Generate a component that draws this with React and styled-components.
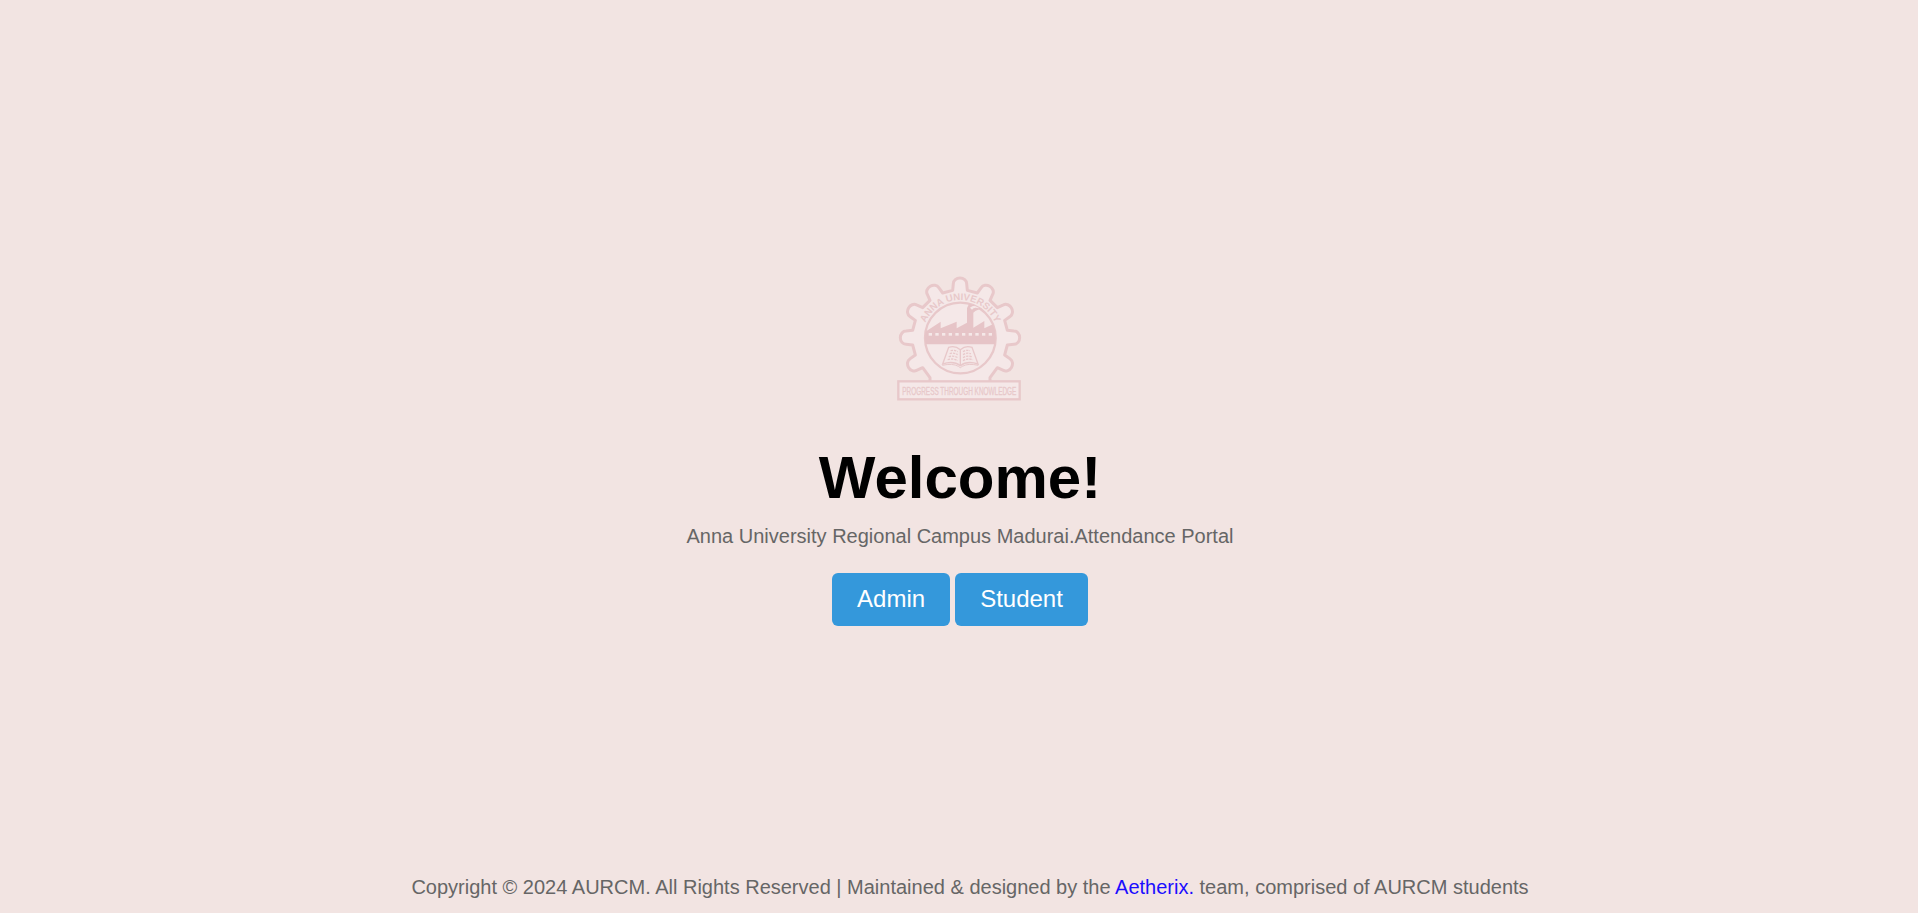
import React from "react";
import styled, { createGlobalStyle } from "styled-components";

const GlobalStyle = createGlobalStyle`
  * { box-sizing: border-box; }
  body {
    margin: 0;
    background: #f2e4e2;
    font-family: "Liberation Sans", Arial, sans-serif;
  }
`;

const Page = styled.div`
  display: flex;
  flex-direction: column;
  height: 100vh;
`;

const Main = styled.main`
  flex: 1;
  display: flex;
  flex-direction: column;
  align-items: center;
  padding: 265px 0 0 2px;
`;

const Logo = styled.svg`
  display: block;
  width: 140px;
  height: 145px;
  overflow: visible;
`;

const Title = styled.h1`
  margin: 33px 0 0;
  font-size: 60px;
  line-height: 69px;
  font-weight: 700;
  color: #000;
`;

const Subtitle = styled.p`
  margin: 13px 0 0;
  font-size: 20px;
  line-height: 23px;
  color: #666;
`;

const Actions = styled.div`
  display: flex;
  gap: 5px;
  margin-top: 25px;
`;

const Button = styled.button`
  height: 53px;
  padding: 0 25px 1px;
  border: 0;
  border-radius: 6px;
  background: #3498db;
  color: #fff;
  font-family: inherit;
  font-size: 24px;
  line-height: 28px;
  cursor: pointer;
`;

const Footer = styled.footer`
  padding: 0 0 14px 22px;
  text-align: center;
  font-size: 20px;
  line-height: 23px;
  color: #666;
`;

const FooterLink = styled.a`
  color: #1a0dff;
  text-decoration: none;
`;

const CX = 210;
const CY = 218;

// Converts a point of a tooth (sideways offset, distance outwards) to drawing coordinates.
const toothPoint = (deg, side, out) => {
  const a = (deg * Math.PI) / 180;
  const x = CX + out * Math.sin(a) + side * Math.cos(a);
  const y = CY - out * Math.cos(a) + side * Math.sin(a);
  return `${x.toFixed(1)} ${y.toFixed(1)}`;
};

const teeth = [-120, -90, -60, -30, 0, 30, 60, 90, 120]
  .map(
    (d) =>
      `L${toothPoint(d, -22, 142)} L${toothPoint(d, -20, 162)} A20 17 ${d} 0 1 ${toothPoint(d, 20, 162)} L${toothPoint(d, 22, 142)}`
  )
  .join(" ");
const gearPath = `M120 349 V338 ${teeth} L300 338 V349`;

const LINE = "#e8c8ca";
const SOLID = "#e6c4c7";
const PALE = "#f5e8e8";

function Emblem() {
  return (
    <Logo viewBox="0 0 420 435" role="img" aria-label="Anna University">
      <defs>
        <clipPath id="disc">
          <circle cx="211" cy="219" r="106" />
        </clipPath>
        <path id="arc" d="M97 219 A114 114 0 0 1 325 219" />
      </defs>
      <path d={gearPath} fill={PALE} stroke={LINE} strokeWidth="9" strokeLinejoin="round" />
      <circle cx="211" cy="219" r="106" fill={PALE} stroke={LINE} strokeWidth="7" />
      <g clipPath="url(#disc)" fill={SOLID}>
        <path d="M100 238 V204 L152 170 V190 L200 170 V190 L231 173 V137 Q230 120 246 112 H272 L292 134 Q266 128 250 143 V188 L283 168 V190 L325 170 V238 Z" />
        <path d="M240 128 Q250 118 270 125 L266 130 Q252 125 246 134 Z" fill={PALE} />
        <g fill={PALE}>
          {[116, 136, 156, 176, 196, 216, 236, 256, 276, 296].map((x) => (
            <rect key={x} x={x} y="204" width="10" height="8" />
          ))}
        </g>
      </g>
      <g fill="none" stroke={LINE} strokeWidth="4">
        <path d="M211 254 Q195 240 176 247 L158 297 Q190 286 211 302 Q232 286 264 297 L246 247 Q227 240 211 254 V302" />
        <path d="M157 301 Q188 294 205 304 L211 308 L217 304 Q234 294 265 301" strokeWidth="3" />
        <path
          d="M182 257 Q193 254 203 260 M179 266 Q192 262 203 269 M176 275 Q191 271 203 278 M173 284 Q190 279 203 287 M219 260 Q229 254 240 257 M219 269 Q230 262 243 266 M219 278 Q231 271 246 275 M219 287 Q232 279 249 284"
          strokeDasharray="7 3"
        />
      </g>
      <text fontSize="29" fontWeight="700" fill={LINE} textAnchor="middle">
        <textPath href="#arc" startOffset="50%">
          ANNA UNIVERSITY
        </textPath>
      </text>
      <rect x="25" y="349" width="364" height="54" fill={PALE} stroke={LINE} strokeWidth="7" />
      <text x="37" y="390" fontSize="35" fill={LINE} stroke={LINE} textLength="342" lengthAdjust="spacingAndGlyphs">
        PROGRESS THROUGH KNOWLEDGE
      </text>
    </Logo>
  );
}

export default function App() {
  return (
    <Page>
      <GlobalStyle />
      <Main>
        <Emblem />
        <Title>Welcome!</Title>
        <Subtitle>Anna University Regional Campus Madurai.Attendance Portal</Subtitle>
        <Actions>
          <Button>Admin</Button>
          <Button>Student</Button>
        </Actions>
      </Main>
      <Footer>
        Copyright © 2024 AURCM. All Rights Reserved | Maintained &amp; designed by the{" "}
        <FooterLink href="#">Aetherix.</FooterLink> team, comprised of AURCM students
      </Footer>
    </Page>
  );
}
